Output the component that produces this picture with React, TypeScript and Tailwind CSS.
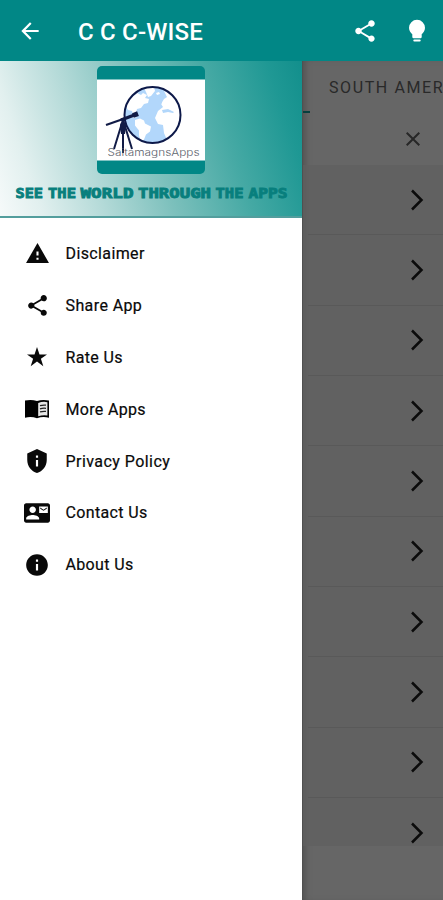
import type { ReactNode } from "react";
import {
  MdArrowBack,
  MdShare,
  MdWarning,
  MdPrivacyTip,
  MdContactMail,
  MdInfo,
  MdClose,
} from "react-icons/md";

const menu: { label: string; icon: ReactNode; spacing: string }[] = [
  { label: "Disclaimer", icon: <MdWarning size={25} />, spacing: "tracking-[0.38px]" },
  { label: "Share App", icon: <MdShare size={25} />, spacing: "tracking-[0.4px]" },
  { label: "Rate Us", icon: <StarIcon />, spacing: "tracking-[0.35px]" },
  { label: "More Apps", icon: <MoreIcon />, spacing: "tracking-[0.32px]" },
  { label: "Privacy Policy", icon: <MdPrivacyTip size={26} />, spacing: "tracking-[0.45px]" },
  { label: "Contact Us", icon: <MdContactMail size={26} />, spacing: "tracking-[0.36px]" },
  { label: "About Us", icon: <MdInfo size={26} />, spacing: "tracking-[0.35px]" },
];

const slogan = [
  { word: "SEE", x: 15.5, width: 27.5 },
  { word: "THE", x: 48, width: 28 },
  { word: "WORLD", x: 80.5, width: 53 },
  { word: "THROUGH", x: 138, width: 73 },
  { word: "THE", x: 215.5, width: 28 },
  { word: "APPS", x: 248.5, width: 39 },
];

function StarIcon() {
  return (
    <svg viewBox="0 0 24 24" width="24" height="24" fill="currentColor">
      <path d="M12 2l2.5 7.4H22l-6.1 4.4 2.4 7.4-6.3-4.6-6.3 4.6 2.4-7.4L2 9.4h7.5z" />
    </svg>
  );
}

function MoreIcon() {
  return (
    <svg viewBox="0 0 26 26" width="26" height="26">
      <path d="M1 4.6q6-1.6 12 .4 6-2 12-.4v17.200q-6-1.600-12 .4-6-2-12-.4z" fill="#000" />
      <path d="M14.2 7q4.6-1.8 9.2-.8v13.200q-4.600-.8-9.200.8z" fill="#e6e6e6" />
      <path d="M16 9.7q3-.9 6-.5M16 12.800q3-.9 6-.5M16 15.900q3-.9 6-.5" fill="none" stroke="#222" strokeWidth="1.3" />
    </svg>
  );
}

function Bulb() {
  return (
    <svg viewBox="0 0 18 24" width="18" height="24" fill="#fff">
      <path d="M9 .8a8 8 0 0 0-8 8c0 3 1.6 4.8 3.3 6.5v2.8c0 .7.5 1.1 1.1 1.1h7.2c.7 0 1.1-.4 1.1-1.1v-2.8C15.4 13.6 17 11.8 17 8.8a8 8 0 0 0-8-8z" />
      <rect x="5.3" y="20.5" width="7.4" height="2.1" rx="1" />
    </svg>
  );
}

function Logo() {
  return (
    <svg viewBox="0 0 108 108" width="108" height="108" className="block">
      <rect width="108" height="108" rx="5" fill="#018786" />
      <rect y="13.5" width="108" height="81" fill="#fff" />
      <circle cx="55.5" cy="49" r="28" fill="#b2d7fb" />
      <g fill="#fff">
        <path d="M33 33l7-6 4 2 2-2 4 2-2 3 4 1-1 4-4 1-3 4-4 1-1 4-3 1-1-3-4-1-3-5z" />
        <path d="M47 22l10-1 1 4-4 5-3 1-2-5z" />
        <path d="M59 27l3-1 1 2-3 1z" />
        <path d="M33 49l4-1 3 3-3 1z" />
        <path d="M38 54l5-1.5 4 2 1 3 6 3-1 5-4 3-2 5-3 3-2-7 0-5-4-5z" />
        <path d="M67 25l6 3 8 8 3 10-1 11-5 10-8 7-3-7-1-8-5-1-3-6 3-7 5-4-2-3 3-5 3-2z" />
      </g>
      <path d="M65 44l6-1 6 3-1 1-5-1-5 1zM61 35l4 1-1 3-3-1z" fill="#b2d7fb" />
      <circle cx="55.5" cy="49" r="28" fill="none" stroke="#0d1949" strokeWidth="2" />
      <path d="M9 59L29 52" stroke="#111b46" strokeWidth="2.2" />
      <path d="M24 54L40 48" stroke="#111b46" strokeWidth="3.2" />
      <path d="M36 49.5l5-1.9" stroke="#111b46" strokeWidth="5" />
      <path d="M26 53v34M25 57L17 83M27 57l8 26" stroke="#111b46" strokeWidth="2" />
      <path d="M23 59l3-7 3 7-1 9h-4z" fill="#111b46" />
      <text x="10.5" y="90" textLength="92" lengthAdjust="spacingAndGlyphs" fontSize="10" className="font-['Inter',sans-serif] font-light" fill="#5d646e">
        SaitamagnsApps
      </text>
    </svg>
  );
}

export default function App() {
  return (
    <div className="flex h-[900px] w-[443px] flex-col overflow-hidden bg-[#666] font-['Roboto',sans-serif]">
      <header className="flex h-[61px] shrink-0 items-center bg-[#018786] text-white">
        <MdArrowBack size={26} className="ml-[17px]" />
        <h1 className="ml-[35px] mt-[3px] w-[260px] whitespace-nowrap text-[24px] font-medium leading-7 tracking-[0.2px]">C C C-WISE</h1>
        <MdShare size={26} className="ml-[14px]" />
        <div className="ml-[30px]"><Bulb /></div>
      </header>
      <div className="flex min-h-0 flex-1">
        <aside className="w-[302px] shrink-0 bg-white">
          <div className="flex h-[157px] flex-col items-center border-b-2 border-[#539e9d] bg-[linear-gradient(72deg,#f6fafa_0%,#e2f0ef_12%,#b4dad8_30%,#7cc0bc_50%,#45a9a4_72%,#1f9894_90%,#128f8c_100%)] pt-[5px]">
            <Logo />
            <svg width="302" height="26" className="mt-[5px] block">
              {slogan.map((s) => (
                <text key={s.x} x={s.x} y="19" textLength={s.width} lengthAdjust="spacingAndGlyphs" fontSize="14" strokeWidth="0.9" className="fill-[#087f7d] stroke-[#087f7d] font-['DejaVu_Sans_Mono',monospace] font-bold">
                  {s.word}
                </text>
              ))}
            </svg>
          </div>
          <nav className="pt-[10px]">
            {menu.map((item) => (
              <div key={item.label} className="flex h-[51.8px] items-center text-[#090909]">
                <div className="ml-6 flex w-[26px] justify-center">{item.icon}</div>
                <span className={"ml-[15.5px] pt-px text-[16px] leading-5 [-webkit-text-stroke:0.2px_#090909] " + item.spacing}>{item.label}</span>
              </div>
            ))}
          </nav>
        </aside>
        <main className="min-w-0 flex-1 overflow-hidden border-l border-[#505050] bg-[#666] shadow-[inset_5px_0_6px_-3px_#505050]">
          <div className="h-[50px] overflow-hidden pl-[26px] pt-4 text-[16px] leading-[22px] tracking-[1.6px] whitespace-nowrap text-[#292929]">SOUTH AMERICA</div>
          <div className="h-[2px] w-[7px] bg-[#073f3e]" />
          <div className="flex h-[52px] items-center justify-end pr-[18px] text-[#272727]"><MdClose size={24} /></div>
          <div className="h-[681px] overflow-hidden bg-[#606060]/70">
            {Array.from({ length: 10 }, (_, i) => (
              <div key={i} className="ml-[5px] flex h-[70.35px] items-center justify-end border-b border-[#595959] pr-[19px]">
                <svg width="14" height="22" viewBox="0 0 14 22">
                  <path d="M2 1.5l9.5 9.5L2 20.5" fill="none" stroke="#0b0b0b" strokeWidth="2.5" />
                </svg>
              </div>
            ))}
          </div>
        </main>
      </div>
    </div>
  );
}
